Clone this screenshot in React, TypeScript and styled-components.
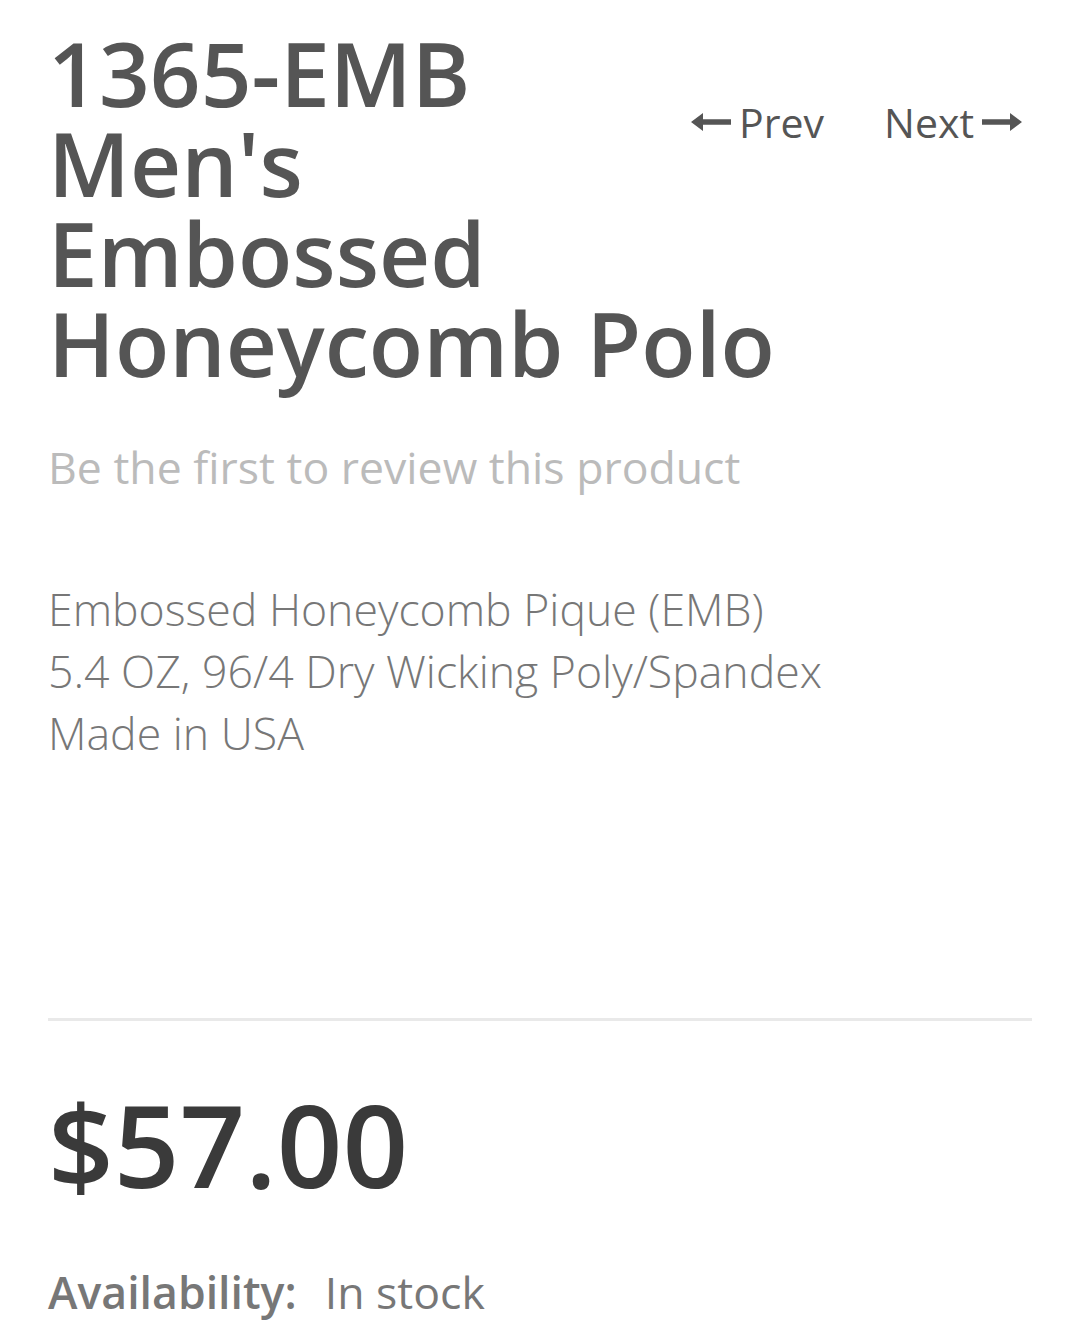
import React from "react";
import styled, { createGlobalStyle } from "styled-components";

const GlobalStyle = createGlobalStyle`
  html, body {
    margin: 0;
    padding: 0;
    background: #fff;
  }
  body {
    font-family: "Open Sans", "Noto Sans", sans-serif;
  }
`;

function ArrowIcon({ dir }: { dir: "left" | "right" }) {
  return (
    <svg width="40" height="18" viewBox="0 0 40 18">
      {dir === "left" ? (
        <path d="M0 9 L12 0 L12 6.3 L40 6.3 L40 11.7 L12 11.7 L12 18 Z" fill="#555" />
      ) : (
        <path d="M40 9 L28 0 L28 6.3 L0 6.3 L0 11.7 L28 11.7 L28 18 Z" fill="#555" />
      )}
    </svg>
  );
}

export default function App() {
  return (
    <>
      <GlobalStyle />
      <ProductPage>
        <TitleRow>
          <ProductTitle>
            1365-EMB
            <br />
            Men's
            <br />
            Embossed
            <br />
            Honeycomb Polo
          </ProductTitle>
          <PagerNav>
            <PagerLink href="#">
              <ArrowIcon dir="left" />
              Prev
            </PagerLink>
            <PagerLink href="#">
              Next
              <ArrowIcon dir="right" />
            </PagerLink>
          </PagerNav>
        </TitleRow>

        <ReviewLink href="#">Be the first to review this product</ReviewLink>

        <Description>
          Embossed Honeycomb Pique (EMB)
          <br />
          5.4 OZ, 96/4 Dry Wicking Poly/Spandex
          <br />
          Made in USA
        </Description>

        <Divider />

        <Price>$57.00</Price>

        <Availability>
          <AvailabilityLabel>Availability:</AvailabilityLabel>
          <AvailabilityValue>In stock</AvailabilityValue>
        </Availability>
      </ProductPage>
    </>
  );
}

const ProductPage = styled.div`
  padding: 28px 48px 0 48px;
  width: 1080px;
  box-sizing: border-box;
`;

const TitleRow = styled.div`
  display: flex;
  justify-content: space-between;
  align-items: flex-start;
`;

const ProductTitle = styled.h1`
  flex: 1;
  min-width: 0;
  margin: 0;
  font-size: 89px;
  line-height: 90px;
  font-weight: 600;
  color: #555;
  white-space: nowrap;
`;

const PagerNav = styled.nav`
  flex: none;
  display: flex;
  gap: 60px;
  margin-top: 65px;
  margin-right: 10px;
`;

const PagerLink = styled.a`
  display: flex;
  align-items: center;
  gap: 8px;
  font-size: 41px;
  line-height: 58px;
  color: #555;
  text-decoration: none;
`;

const ReviewLink = styled.a`
  display: block;
  margin-top: 48px;
  font-size: 44.6px;
  line-height: 62px;
  color: #bbb;
  text-decoration: none;
`;

const Description = styled.p`
  margin: 80px 0 0 0;
  font-size: 44.6px;
  line-height: 62px;
  font-weight: 300;
  color: #777;
`;

const Divider = styled.hr`
  margin: 254px 0 0 0;
  border: 0;
  height: 3px;
  background: #e9e9e9;
`;

const Price = styled.div`
  margin-top: 53px;
  font-size: 115px;
  line-height: 140px;
  font-weight: 600;
  color: #3a3a3a;
`;

const Availability = styled.div`
  display: flex;
  gap: 28px;
  margin-top: 47px;
  font-size: 44.6px;
  line-height: 62px;
  color: #777;
`;

const AvailabilityLabel = styled.span`
  font-weight: 600;
`;

const AvailabilityValue = styled.span`
  font-weight: 400;
`;
